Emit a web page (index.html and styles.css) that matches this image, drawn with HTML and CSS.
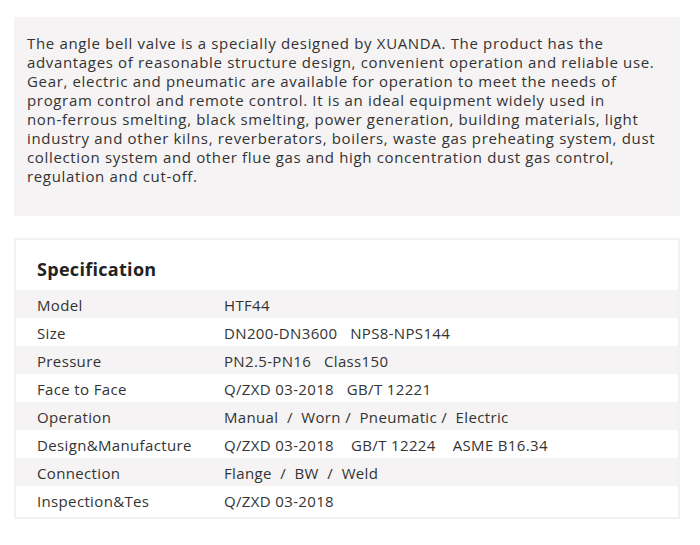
FILE: index.html
```html
<!DOCTYPE html>
<html>
<head>
<meta charset="utf-8">
<link rel="stylesheet" href="styles.css">
</head>
<body>
<div class="page">
  <div class="intro">
    <p>The angle bell valve is a specially designed by XUANDA. The product has the advantages of reasonable structure design, convenient operation and reliable use. Gear, electric and pneumatic are available for operation to meet the needs of program control and remote control. It is an ideal equipment widely used in non&#8209;ferrous smelting, black smelting, power generation, building materials, light industry and other kilns, reverberators, boilers, waste gas preheating system, dust collection system and other flue gas and high concentration dust gas control, regulation and cut-off.</p>
  </div>
  <div class="spec">
    <h2 class="spec-title">Specification</h2>
    <div class="row alt"><div class="k">Model</div><div class="v">HTF44</div></div>
    <div class="row"><div class="k">Size</div><div class="v">DN200-DN3600&nbsp;&nbsp;&nbsp;NPS8-NPS144</div></div>
    <div class="row alt"><div class="k">Pressure</div><div class="v">PN2.5-PN16&nbsp;&nbsp;&nbsp;Class150</div></div>
    <div class="row"><div class="k">Face to Face</div><div class="v">Q/ZXD 03-2018&nbsp;&nbsp;&nbsp;GB/T 12221</div></div>
    <div class="row alt"><div class="k">Operation</div><div class="v">Manual&nbsp;&nbsp;/&nbsp;&nbsp;Worn /&nbsp;&nbsp;Pneumatic /&nbsp;&nbsp;Electric</div></div>
    <div class="row"><div class="k">Design&amp;Manufacture</div><div class="v">Q/ZXD 03-2018&nbsp;&nbsp;&nbsp;&nbsp;GB/T 12224&nbsp;&nbsp;&nbsp;&nbsp;ASME B16.34</div></div>
    <div class="row alt"><div class="k">Connection</div><div class="v">Flange&nbsp;&nbsp;/&nbsp;&nbsp;BW&nbsp;&nbsp;/&nbsp;&nbsp;Weld</div></div>
    <div class="row"><div class="k">Inspection&amp;Tes</div><div class="v">Q/ZXD 03-2018</div></div>
  </div>
</div>
</body>
</html>
```
FILE: styles.css
```css
html, body { margin: 0; padding: 0; background: #fff; }
body { font-family: "Open Sans", "Noto Sans", sans-serif; color: #333; }
.page { padding: 17px 20px 0 14px; }
.intro {
  background: #f5f3f4;
  padding: 17px 13px 30px 13px;
  height: 152px;
}
.intro p {
  margin: 0;
  font-size: 15px;
  line-height: 19px;
  letter-spacing: 0.66px;
  color: #333;
}
.spec {
  margin-top: 22px;
  border: 2px solid #f3f2f2;
  padding-bottom: 3px;
}
.spec-title {
  margin: 0;
  height: 50px;
  box-sizing: border-box;
  padding: 17px 0 0 21px;
  font-size: 18px;
  font-weight: bold;
  line-height: 24px;
  color: #222;
  letter-spacing: 0.3px;
}
.row {
  display: flex;
  height: 28px;
  align-items: center;
  font-size: 15px;
  letter-spacing: 0.35px;
  padding-top: 1px;
  box-sizing: border-box;
}
.row.alt { background: #f5f3f4; }
.k { width: 187px; padding-left: 21px; }
.v { flex: 1; }
```
